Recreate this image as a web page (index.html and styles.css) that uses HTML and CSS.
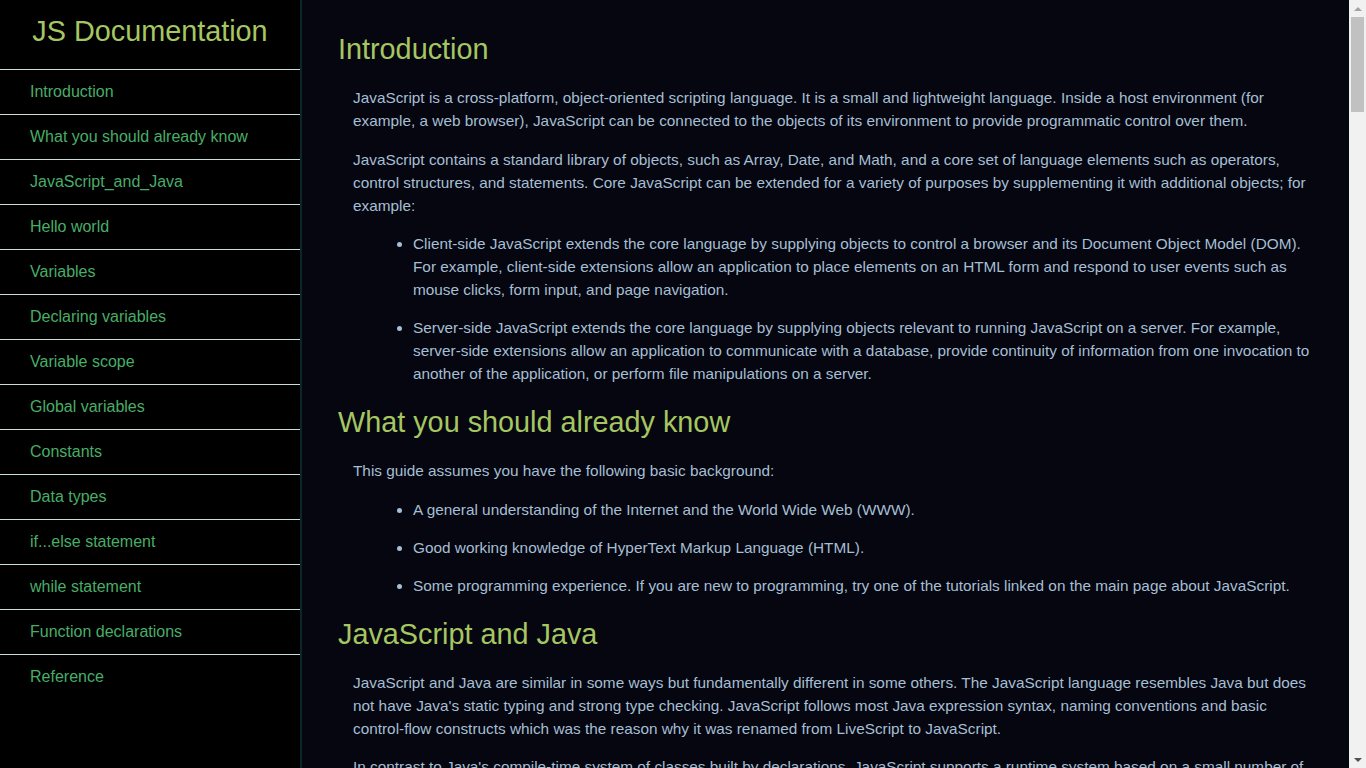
FILE: index.html
```html
<!DOCTYPE html>
<html lang="en">
<head>
<meta charset="utf-8">
<title>JS Documentation</title>
<link rel="stylesheet" href="styles.css">
</head>
<body>
<nav class="navbar" id="navbar">
  <header class="nav-header"><h1>JS Documentation</h1></header>
  <ul class="nav-list">
    <li><a class="nav-link" href="#Introduction">Introduction</a></li>
    <li><a class="nav-link" href="#What_you_should_already_know">What you should already know</a></li>
    <li><a class="nav-link" href="#JavaScript_and_Java">JavaScript_and_Java</a></li>
    <li><a class="nav-link" href="#Hello_world">Hello world</a></li>
    <li><a class="nav-link" href="#Variables">Variables</a></li>
    <li><a class="nav-link" href="#Declaring_variables">Declaring variables</a></li>
    <li><a class="nav-link" href="#Variable_scope">Variable scope</a></li>
    <li><a class="nav-link" href="#Global_variables">Global variables</a></li>
    <li><a class="nav-link" href="#Constants">Constants</a></li>
    <li><a class="nav-link" href="#Data_types">Data types</a></li>
    <li><a class="nav-link" href="#if...else_statement">if...else statement</a></li>
    <li><a class="nav-link" href="#while_statement">while statement</a></li>
    <li><a class="nav-link" href="#Function_declarations">Function declarations</a></li>
    <li><a class="nav-link" href="#Reference">Reference</a></li>
  </ul>
</nav>
<div class="fake-scrollbar" aria-hidden="true">
  <div class="sb-btn sb-up"><span class="arrow-up"></span></div>
  <div class="sb-track"><div class="sb-thumb"></div></div>
  <div class="sb-btn sb-down"><span class="arrow-down"></span></div>
</div>
<main class="main-doc" id="main-doc">
  <section class="main-section" id="Introduction">
    <h2>Introduction</h2>
    <p>JavaScript is a cross-platform, object-oriented scripting language. It is a small and lightweight language. Inside a host environment (for example, a web browser), JavaScript can be connected to the objects of its environment to provide programmatic control over them.</p>
    <p>JavaScript contains a standard library of objects, such as Array, Date, and Math, and a core set of language elements such as operators, control structures, and statements. Core JavaScript can be extended for a variety of purposes by supplementing it with additional objects; for example:</p>
    <ul>
      <li>Client-side JavaScript extends the core language by supplying objects to control a browser and its Document Object Model (DOM). For example, client-side extensions allow an application to place elements on an HTML form and respond to user events such as mouse clicks, form input, and page navigation.</li>
      <li>Server-side JavaScript extends the core language by supplying objects relevant to running JavaScript on a server. For example, server-side extensions allow an application to communicate with a database, provide continuity of information from one invocation to another of the application, or perform file manipulations on a server.</li>
    </ul>
  </section>
  <section class="main-section" id="What_you_should_already_know">
    <h2>What you should already know</h2>
    <p>This guide assumes you have the following basic background:</p>
    <ul>
      <li>A general understanding of the Internet and the World Wide Web (WWW).</li>
      <li>Good working knowledge of HyperText Markup Language (HTML).</li>
      <li>Some programming experience. If you are new to programming, try one of the tutorials linked on the main page about JavaScript.</li>
    </ul>
  </section>
  <section class="main-section" id="JavaScript_and_Java">
    <h2>JavaScript and Java</h2>
    <p>JavaScript and Java are similar in some ways but fundamentally different in some others. The JavaScript language resembles Java but does not have Java's static typing and strong type checking. JavaScript follows most Java expression syntax, naming conventions and basic control-flow constructs which was the reason why it was renamed from LiveScript to JavaScript.</p>
    <p>In contrast to Java's compile-time system of classes built by declarations, JavaScript supports a runtime system based on a small number of data types representing numeric, Boolean, and string values. JavaScript has a prototype-based object model instead of the more common class-based object model. The prototype-based model provides dynamic inheritance; that is, what is inherited can vary for individual objects. JavaScript also supports functions without any special declarative requirements. Functions can be properties of objects, executing as loosely typed methods.</p>
    <p>JavaScript is a very free-form language compared to Java. You do not have to declare all variables, classes, and methods. You do not have to be concerned with whether methods are public, private, or protected, and you do not have to implement interfaces. Variables, parameters, and function return types are not explicitly typed.</p>
  </section>
  <section class="main-section" id="Hello_world">
    <h2>Hello world</h2>
    <p>To get started with writing JavaScript, open the Scratchpad and write your first "Hello world" JavaScript code:</p>
    <pre class="code">function greetMe(yourName) { alert("Hello " + yourName); }
greetMe("World");</pre>
    <p>Select the code in the pad and hit Ctrl+R to watch it unfold in your browser!</p>
  </section>
  <section class="main-section" id="Variables">
    <h2>Variables</h2>
    <p>You use variables as symbolic names for values in your application. The names of variables, called identifiers, conform to certain rules.</p>
    <p>A JavaScript identifier must start with a letter, underscore (_), or dollar sign ($); subsequent characters can also be digits (0-9). Because JavaScript is case sensitive, letters include the characters "A" through "Z" (uppercase) and the characters "a" through "z" (lowercase).</p>
    <p>You can use ISO 8859-1 or Unicode letters such as å and ü in identifiers. You can also use the Unicode escape sequences as characters in identifiers. Some examples of legal names are Number_hits, temp99, and _name.</p>
  </section>
  <section class="main-section" id="Declaring_variables">
    <h2>Declaring variables</h2>
    <p>You can declare a variable in three ways:</p>
    <p>With the keyword var. For example,</p>
    <pre class="code">var x = 42.</pre>
    <p>This syntax can be used to declare both local and global variables.</p>
    <p>By simply assigning it a value. For example,</p>
    <pre class="code">x = 42.</pre>
    <p>This always declares a global variable. It generates a strict JavaScript warning. You shouldn't use this variant.</p>
    <p>With the keyword let. For example,</p>
    <pre class="code">let y = 13.</pre>
    <p>This syntax can be used to declare a block scope local variable. See Variable scope below.</p>
  </section>
  <section class="main-section" id="Variable_scope">
    <h2>Variable scope</h2>
    <p>When you declare a variable outside of any function, it is called a global variable, because it is available to any other code in the current document. When you declare a variable within a function, it is called a local variable, because it is available only within that function.</p>
    <p>JavaScript before ECMAScript 2015 does not have block statement scope; rather, a variable declared within a block is local to the function (or global scope) that the block resides within. For example the following code will log 5, because the scope of x is the function (or global context) within which x is declared, not the block, which in this case is an if statement.</p>
    <pre class="code">if (true) {
  var x = 5;
}
console.log(x); // 5</pre>
    <p>This behavior changes, when using the let declaration introduced in ECMAScript 2015.</p>
    <pre class="code">if (true) {
  let y = 5;
}
console.log(y); // ReferenceError: y is not defined</pre>
  </section>
  <section class="main-section" id="Global_variables">
    <h2>Global variables</h2>
    <p>Global variables are in fact properties of the global object. In web pages the global object is window, so you can set and access global variables using the window.variable syntax.</p>
    <p>Consequently, you can access global variables declared in one window or frame from another window or frame by specifying the window or frame name. For example, if a variable called phoneNumber is declared in a document, you can refer to this variable from an iframe as parent.phoneNumber.</p>
  </section>
  <section class="main-section" id="Constants">
    <h2>Constants</h2>
    <p>You can create a read-only, named constant with the const keyword. The syntax of a constant identifier is the same as for a variable identifier: it must start with a letter, underscore or dollar sign and can contain alphabetic, numeric, or underscore characters.</p>
    <pre class="code">const PI = 3.14;</pre>
    <p>A constant cannot change value through assignment or be re-declared while the script is running. It has to be initialized to a value.</p>
    <p>The scope rules for constants are the same as those for let block scope variables. If the const keyword is omitted, the identifier is assumed to represent a variable.</p>
    <p>You cannot declare a constant with the same name as a function or variable in the same scope. For example:</p>
    <pre class="code">// THIS WILL CAUSE AN ERROR
function f() {};
const f = 5;

// THIS WILL CAUSE AN ERROR ALSO
function f() {
  const g = 5;
  var g;

  //statements
}</pre>
    <p>However, object attributes are not protected, so the following statement is executed without problems.</p>
    <pre class="code">const MY_OBJECT = {"key": "value"};
MY_OBJECT.key = "otherValue";</pre>
  </section>
  <section class="main-section" id="Data_types">
    <h2>Data types</h2>
    <p>The latest ECMAScript standard defines seven data types:</p>
    <ul>
      <li>Six data types that are primitives:</li>
      <li>Boolean. true and false.</li>
      <li>null. A special keyword denoting a null value. Because JavaScript is case-sensitive, null is not the same as Null, NULL, or any other variant.</li>
      <li>undefined. A top-level property whose value is undefined.</li>
      <li>Number. 42 or 3.14159.</li>
      <li>String. "Howdy"</li>
      <li>Symbol (new in ECMAScript 2015). A data type whose instances are unique and immutable.</li>
      <li>and Object</li>
    </ul>
    <p>Although these data types are a relatively small amount, they enable you to perform useful functions with your applications. Objects and functions are the other fundamental elements in the language. You can think of objects as named containers for values, and functions as procedures that your application can perform.</p>
  </section>
  <section class="main-section" id="if...else_statement">
    <h2>if...else statement</h2>
    <p>Use the if statement to execute a statement if a logical condition is true. Use the optional else clause to execute a statement if the condition is false. An if statement looks as follows:</p>
    <pre class="code">if (condition) {
  statement_1;
} else {
  statement_2;
}</pre>
    <p>condition can be any expression that evaluates to true or false. See Boolean for an explanation of what evaluates to true and false. If condition evaluates to true, statement_1 is executed; otherwise, statement_2 is executed. statement_1 and statement_2 can be any statement, including further nested if statements.</p>
    <p>You may also compound the statements using else if to have multiple conditions tested in sequence, as follows:</p>
    <pre class="code">if (condition_1) {
  statement_1;
} else if (condition_2) {
  statement_2;
} else if (condition_n) {
  statement_n;
} else {
  statement_last;
}</pre>
    <p>In the case of multiple conditions only the first logical condition which evaluates to true will be executed. To execute multiple statements, group them within a block statement ({ ... }). In general, it's good practice to always use block statements, especially when nesting if statements:</p>
    <pre class="code">if (condition) {
  statement_1_runs_if_condition_is_true;
  statement_2_runs_if_condition_is_true;
} else {
  statement_3_runs_if_condition_is_false;
  statement_4_runs_if_condition_is_false;
}</pre>
    <p>It is advisable to not use simple assignments in a conditional expression, because the assignment can be confused with equality when glancing over the code.</p>
  </section>
  <section class="main-section" id="while_statement">
    <h2>while statement</h2>
    <p>A while statement executes its statements as long as a specified condition evaluates to true. A while statement looks as follows:</p>
    <pre class="code">while (condition)
  statement</pre>
    <p>If the condition becomes false, statement within the loop stops executing and control passes to the statement following the loop.</p>
    <p>The condition test occurs before statement in the loop is executed. If the condition returns true, statement is executed and the condition is tested again. If the condition returns false, execution stops and control is passed to the statement following while.</p>
    <p>To execute multiple statements, use a block statement ({ ... }) to group those statements.</p>
    <p>Example:</p>
    <p>The following while loop iterates as long as n is less than three:</p>
    <pre class="code">var n = 0;
var x = 0;
while (n &lt; 3) {
  n++;
  x += n;
}</pre>
    <p>With each iteration, the loop increments n and adds that value to x. Therefore, x and n take on the following values:</p>
    <ul>
      <li>After the first pass: n = 1 and x = 1</li>
      <li>After the second pass: n = 2 and x = 3</li>
      <li>After the third pass: n = 3 and x = 6</li>
    </ul>
    <p>After completing the third pass, the condition n &lt; 3 is no longer true, so the loop terminates.</p>
  </section>
  <section class="main-section" id="Function_declarations">
    <h2>Function declarations</h2>
    <p>A function definition (also called a function declaration, or function statement) consists of the function keyword, followed by:</p>
    <ul>
      <li>The name of the function.</li>
      <li>A list of arguments to the function, enclosed in parentheses and separated by commas.</li>
      <li>The JavaScript statements that define the function, enclosed in curly brackets, { }.</li>
    </ul>
    <p>For example, the following code defines a simple function named square:</p>
    <pre class="code">function square(number) {
  return number * number;
}</pre>
    <p>The function square takes one argument, called number. The function consists of one statement that says to return the argument of the function (that is, number) multiplied by itself. The return statement specifies the value returned by the function.</p>
    <pre class="code">return number * number;</pre>
    <p>Primitive parameters (such as a number) are passed to functions by value; the value is passed to the function, but if the function changes the value of the parameter, this change is not reflected globally or in the calling function.</p>
  </section>
  <section class="main-section" id="Reference">
    <h2>Reference</h2>
    <ul>
      <li>All the documentation in this page is taken from MDN</li>
    </ul>
  </section>
</main>
</body>
</html>
```
FILE: styles.css
```css
html, body {
  margin: 0;
  padding: 0;
}
body {
  background: #05060f;
  font-family: "Liberation Sans", Arial, sans-serif;
  color: #a6bfd4;
}
.navbar {
  position: fixed;
  top: 0;
  left: 0;
  bottom: 0;
  width: 300px;
  background: #000;
  border-right: 2px solid #0d2629;
}
.nav-header {
  height: 69px;
  box-sizing: border-box;
  padding-top: 15px;
}
.nav-header h1 {
  margin: 0;
  text-align: center;
  font-size: 28.8px;
  line-height: 33px;
  font-weight: normal;
  color: #a6c662;
}
.nav-list {
  list-style: none;
  margin: 0;
  padding: 0;
}
.nav-list li {
  border-top: 1px solid #c6dede;
}
.nav-link {
  display: block;
  padding: 13px 30px;
  font-size: 16px;
  line-height: 18px;
  color: #48ad68;
  text-decoration: none;
}

/* window scrollbar look (drawn over the right edge) */
.fake-scrollbar {
  position: fixed;
  top: 0;
  right: 0;
  width: 17px;
  height: 100vh;
  background: #f1f1f1;
  display: flex;
  flex-direction: column;
  z-index: 10;
}
.sb-btn {
  height: 17px;
  display: flex;
  align-items: center;
  justify-content: center;
  flex: none;
}
.sb-track {
  flex: 1;
  padding: 0 2px;
}
.sb-thumb {
  height: 95px;
  background: #c1c1c1;
}
.arrow-up {
  width: 0;
  height: 0;
  border-left: 4px solid transparent;
  border-right: 4px solid transparent;
  border-bottom: 4px solid #a3a3a3;
}
.arrow-down {
  width: 0;
  height: 0;
  border-left: 4px solid transparent;
  border-right: 4px solid transparent;
  border-top: 4px solid #505050;
}

.main-doc {
  margin-left: 302px;
  padding: 12px 53px 40px 36px;
}
.main-section h2 {
  margin: 21px 0 20px;
  font-size: 28.8px;
  line-height: 33px;
  font-weight: normal;
  color: #a6c662;
}
.main-section p {
  margin: 15.5px 0 15.5px 15px;
  font-size: 15.35px;
  line-height: 23px;
}
.main-section ul {
  margin: 15px 0 15px 15px;
  padding-left: 60px;
}
.main-section li {
  margin: 15px 0;
  font-size: 15.35px;
  line-height: 23px;
}
.code {
  margin: 15px 0 15px 15px;
  padding: 12px 16px;
  background: #0d1120;
  color: #a6bfd4;
  font-family: "Liberation Mono", "Courier New", monospace;
  font-size: 14px;
  line-height: 20px;
  white-space: pre-wrap;
}
```
